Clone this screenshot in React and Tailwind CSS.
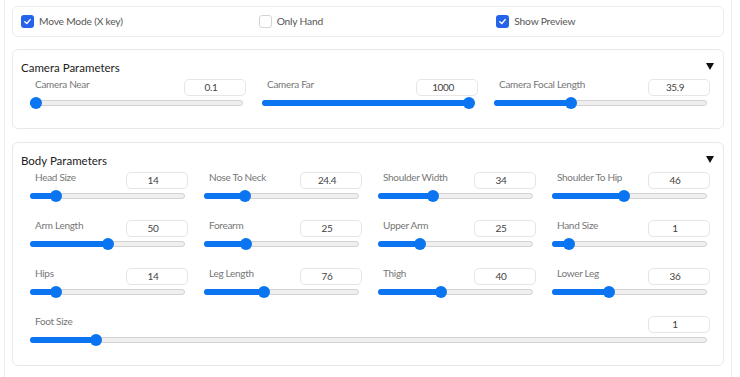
import React from 'react'

const cameraParams = [
    { label: 'Camera Near', value: '0.1', pct: 0 },
    { label: 'Camera Far', value: '1000', pct: 1 },
    { label: 'Camera Focal Length', value: '35.9', pct: 0.353 },
]

const bodyParams = [
    { label: 'Head Size', value: '14', pct: 0.14 },
    { label: 'Nose To Neck', value: '24.4', pct: 0.244 },
    { label: 'Shoulder Width', value: '34', pct: 0.34 },
    { label: 'Shoulder To Hip', value: '46', pct: 0.46 },
    { label: 'Arm Length', value: '50', pct: 0.5 },
    { label: 'Forearm', value: '25', pct: 0.25 },
    { label: 'Upper Arm', value: '25', pct: 0.25 },
    { label: 'Hand Size', value: '1', pct: 0.08 },
    { label: 'Hips', value: '14', pct: 0.14 },
    { label: 'Leg Length', value: '76', pct: 0.38 },
    { label: 'Thigh', value: '40', pct: 0.4 },
    { label: 'Lower Leg', value: '36', pct: 0.357 },
]

const Checkbox = ({ checked, label }) => {
    return (
        <label className="flex items-center gap-[5px]">
            {checked ? (
                <span className="flex h-[13px] w-[13px] items-center justify-center rounded-[3px] bg-[#2563eb]">
                    <svg width="9" height="9" viewBox="0 0 10 10" fill="none">
                        <path d="M2 5.2 L4.2 7.3 L8 2.9" stroke="white" strokeWidth="1.6" strokeLinecap="round" strokeLinejoin="round" />
                    </svg>
                </span>
            ) : (
                <span className="h-[13px] w-[13px] rounded-[3px] border border-[#d4d4d4] bg-white"></span>
            )}
            <span className="text-[10.25px] tracking-[-0.2px] text-[#555]">{label}</span>
        </label>
    )
}

const Slider = ({ pct }) => {
    return (
        <div className="relative mt-[1px] h-[12px] mr-[3px]">
            <div className="absolute left-0 right-0 top-[3px] h-[6px] rounded-full border border-[#d2d2d2] bg-[#efefef]"></div>
            <div
                className="absolute left-0 top-[3px] h-[6px] rounded-full bg-[#0b74f1]"
                style={{ width: `calc(${pct} * (100% - 12px) + 6px)` }}
            ></div>
            <div
                className="absolute top-0 h-[12px] w-[12px] rounded-full bg-[#0b74f1]"
                style={{ left: `calc(${pct} * (100% - 12px))` }}
            ></div>
        </div>
    )
}

const ParamSlider = ({ label, value, pct, className = '' }) => {
    return (
        <div className={className}>
            <div className="flex h-[17px] items-start justify-between">
                <span className="pl-[5px] text-[10px] leading-[11px] tracking-[-0.3px] text-[#777]">{label}</span>
                <div className="flex h-[17px] w-[62px] items-center justify-center rounded-[5px] border border-[#e6e6e6] bg-white pr-[8px] text-[10px] tracking-[-0.4px] text-[#444]">
                    {value}
                </div>
            </div>
            <Slider pct={pct} />
        </div>
    )
}

const Triangle = () => (
    <svg width="8" height="7" viewBox="0 0 8 7">
        <path d="M0 0 H8 L4 7 Z" fill="#111" />
    </svg>
)

const Card = ({ title, children }) => {
    return (
        <div className="rounded-[6px] border border-[#e8e8e8] bg-white px-[8px] pb-[19px] pt-[10px]">
            <div className="flex h-[16px] items-center justify-between pr-[1px]">
                <span className="text-[11.5px] leading-4 text-[#222]">{title}</span>
                <span className="-mt-[3px]"><Triangle /></span>
            </div>
            <div className="mt-[3px] pl-[9px] pr-[5px]">{children}</div>
        </div>
    )
}

export default function App() {
    return (
        <div className="min-h-[377px] bg-white" style={{ fontFamily: 'Lato, "Noto Sans", sans-serif' }}>
            <div className="ml-[4px] min-h-[377px] w-[728px] border-x border-[#ececec] px-[7px] pt-[6px]">
                {/* Toggles */}
                <div className="grid h-[31px] grid-cols-3 items-center gap-x-[19px] rounded-[6px] border border-[#ececec] px-[8px]">
                    <Checkbox checked label="Move Mode (X key)" />
                    <Checkbox label="Only Hand" />
                    <Checkbox checked label="Show Preview" />
                </div>

                {/* Camera Parameters */}
                <div className="mt-[12px]">
                    <Card title="Camera Parameters">
                        <div className="grid grid-cols-3 gap-x-4">
                            {cameraParams.map((p) => (
                                <ParamSlider key={p.label} {...p} />
                            ))}
                        </div>
                    </Card>
                </div>

                {/* Body Parameters */}
                <div className="mt-[13px]">
                    <Card title="Body Parameters">
                        <div className="grid grid-cols-4 gap-x-4 gap-y-[18px]">
                            {bodyParams.map((p) => (
                                <ParamSlider key={p.label} {...p} />
                            ))}
                            <ParamSlider className="col-span-4" label="Foot Size" value="1" pct={0.09} />
                        </div>
                    </Card>
                </div>
            </div>
        </div>
    )
}
